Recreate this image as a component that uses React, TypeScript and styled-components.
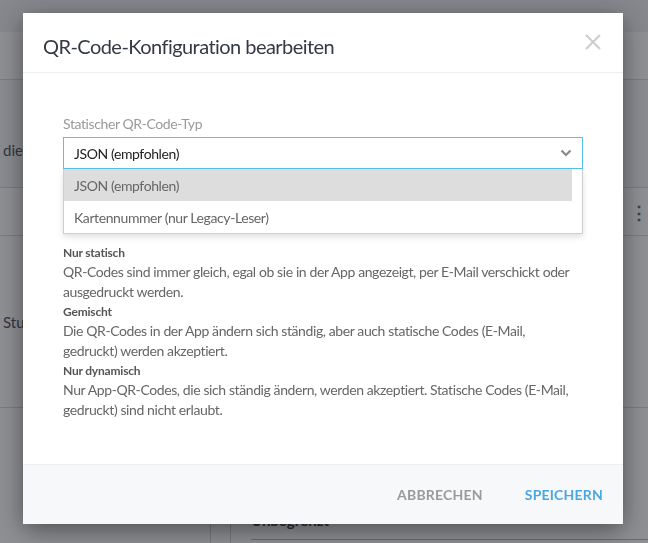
import styled, { createGlobalStyle } from 'styled-components';

// QR code config dialog over a dimmed settings page.

const GlobalStyle = createGlobalStyle`
  html, body {
    margin: 0;
    padding: 0;
    background: #ffffff;
    font-family: Lato, "Liberation Sans", sans-serif;
    color: #555;
  }
  * { box-sizing: border-box; }
`;

const BRAND = '#4aa8e0';
// Lato runs a bit wider than the original face, so tighten it slightly.
const TIGHT = '-0.4px';

/* ---------- page behind the dialog ---------- */

const Page = styled.div`
  width: 648px;
  height: 543px;
  overflow: hidden;
  display: flex;
  flex-direction: column;
  background: #fff;
`;

const TopBar = styled.div`
  height: 32px;
  flex: none;
  background: #eef0f3;
`;

const PageRow = styled.div<{ $height: number; $tint?: boolean; $padTop?: number }>`
  height: ${(p) => p.$height}px;
  flex: none;
  display: flex;
  align-items: center;
  justify-content: space-between;
  padding: ${(p) => p.$padTop ?? 0}px 0 0 3px;
  border-bottom: 1px solid #d8dadd;
  background: ${(p) => (p.$tint ? '#f6f7f9' : '#fff')};
  font-size: 15px;
  color: #555;
`;

const Kebab = styled.span`
  font-size: 18px;
  font-weight: 700;
  color: #666;
  line-height: 1;
`;

const PageBottom = styled.div`
  flex: 1;
  display: grid;
  grid-template-columns: 210px 21px 1fr;
`;

const Gutter = styled.div`
  border-left: 1px solid #d2d4d8;
  border-right: 1px solid #d2d4d8;
`;

const Limits = styled.div`
  display: flex;
  flex-direction: column;
  justify-content: flex-end;
  padding-left: 20px;
`;

const LimitLabel = styled.div`
  font-size: 15px;
  font-weight: 700;
  color: #444;
  padding-bottom: 10px;
  border-bottom: 1px solid #bbb;
  margin-bottom: 3px;
`;

/* ---------- overlay + dialog ---------- */

const Overlay = styled.div`
  position: fixed;
  inset: 0;
  background: rgba(20, 24, 32, 0.48);
  display: flex;
  align-items: flex-start;
  justify-content: flex-start;
  padding: 13px 0 0 23px;
`;

const Dialog = styled.div`
  width: 600px;
  background: #fff;
  box-shadow: 0 6px 24px rgba(0, 0, 0, 0.45);
  display: flex;
  flex-direction: column;
`;

const Header = styled.div`
  height: 60px;
  display: flex;
  align-items: center;
  justify-content: space-between;
  padding: 0 20px;
  border-bottom: 1px solid #eceef0;
`;

const Title = styled.h2`
  margin: 0;
  font-size: 20px;
  font-weight: 400;
  letter-spacing: -0.55px;
  color: #333a44;
  padding-top: 6px;
`;

const CloseButton = styled.button`
  border: none;
  background: none;
  padding: 0;
  width: 20px;
  height: 20px;
  margin-top: -2px;
  display: flex;
  align-items: center;
  justify-content: center;
  cursor: pointer;
`;

const Body = styled.div`
  padding: 41px 40px 43px 40px;
`;

const FieldLabel = styled.div`
  font-size: 14px;
  line-height: 20px;
  letter-spacing: ${TIGHT};
  color: #9a9a9a;
  margin-bottom: 3px;
`;

const SelectWrap = styled.div`
  position: relative;
`;

const SelectBox = styled.div`
  height: 32px;
  border: 1px solid #5bbfeb;
  display: flex;
  align-items: center;
  justify-content: space-between;
  padding: 0 10px;
  font-size: 14px;
  letter-spacing: ${TIGHT};
  color: #222;
`;

const Menu = styled.ul`
  position: absolute;
  left: 0;
  right: 0;
  top: 100%;
  margin: 0;
  padding: 0 10px 0 0;
  list-style: none;
  background: #fff;
  border: 1px solid #cfcfcf;
  border-top: none;
  box-shadow: 0 3px 6px rgba(0, 0, 0, 0.12);
  z-index: 2;
`;

const MenuItem = styled.li<{ $active?: boolean }>`
  height: 32px;
  display: flex;
  align-items: center;
  padding: 0 10px;
  font-size: 14px;
  letter-spacing: ${TIGHT};
  color: #666;
  background: ${(p) => (p.$active ? '#dddddd' : 'transparent')};
`;

const Help = styled.div`
  margin-top: 75px;
  max-width: 514px;
`;

const HelpTitle = styled.div`
  font-size: 12px;
  line-height: 18px;
  font-weight: 700;
  letter-spacing: -0.2px;
  color: #555;
`;

const HelpText = styled.p`
  margin: 0 0 1px 0;
  font-size: 14px;
  line-height: 20px;
  letter-spacing: ${TIGHT};
  color: #666;
`;

const Footer = styled.div`
  height: 60px;
  display: flex;
  align-items: center;
  justify-content: flex-end;
  gap: 42px;
  padding: 0 20px 0 0;
  background: #f7f8fa;
  border-top: 1px solid #eceef0;
`;

const TextButton = styled.button<{ $primary?: boolean }>`
  border: none;
  background: none;
  padding: 0;
  font-family: inherit;
  font-size: 14px;
  font-weight: 700;
  letter-spacing: 0.2px;
  text-transform: uppercase;
  color: ${(p) => (p.$primary ? BRAND : '#9a9a9a')};
  cursor: pointer;
`;

const OPTIONS = ['JSON (empfohlen)', 'Kartennummer (nur Legacy-Leser)'];

const MODES = [
  {
    title: 'Nur statisch',
    text: 'QR-Codes sind immer gleich, egal ob sie in der App angezeigt, per E-Mail verschickt oder ausgedruckt werden.',
  },
  {
    title: 'Gemischt',
    text: 'Die QR-Codes in der App ändern sich ständig, aber auch statische Codes (E-Mail, gedruckt) werden akzeptiert.',
  },
  {
    title: 'Nur dynamisch',
    text: 'Nur App-QR-Codes, die sich ständig ändern, werden akzeptiert. Statische Codes (E-Mail, gedruckt) sind nicht erlaubt.',
  },
];

function CloseIcon() {
  return (
    <svg width="16" height="16" viewBox="0 0 16 16">
      <path d="M1 1 L15 15 M15 1 L1 15" stroke="#cccccc" strokeWidth="2" fill="none" />
    </svg>
  );
}

function Chevron() {
  return (
    <svg width="12" height="8" viewBox="0 0 12 8">
      <path d="M1.5 1.5 L6 6 L10.5 1.5" stroke="#8a8a8a" strokeWidth="2.2" fill="none" />
    </svg>
  );
}

export default function App() {
  const selected = OPTIONS[0];
  return (
    <>
      <GlobalStyle />
      <Page>
        <TopBar />
        <PageRow $height={48} />
        <PageRow $height={108} $tint $padTop={32}>
          <span>die</span>
        </PageRow>
        <PageRow $height={48}>
          <span />
          <Kebab>⋮</Kebab>
        </PageRow>
        <PageRow $height={172}>
          <span>Stud</span>
        </PageRow>
        <PageBottom>
          <div />
          <Gutter />
          <Limits>
            <LimitLabel>Unbegrenzt</LimitLabel>
          </Limits>
        </PageBottom>
      </Page>

      <Overlay>
        <Dialog role="dialog" aria-label="QR-Code-Konfiguration bearbeiten">
          <Header>
            <Title>QR-Code-Konfiguration bearbeiten</Title>
            <CloseButton aria-label="Schließen">
              <CloseIcon />
            </CloseButton>
          </Header>

          <Body>
            <FieldLabel>Statischer QR-Code-Typ</FieldLabel>
            <SelectWrap>
              <SelectBox>
                <span>{selected}</span>
                <Chevron />
              </SelectBox>
              <Menu>
                {OPTIONS.map((o) => (
                  <MenuItem key={o} $active={o === selected}>
                    {o}
                  </MenuItem>
                ))}
              </Menu>
            </SelectWrap>

            <Help>
              {MODES.map((m) => (
                <div key={m.title}>
                  <HelpTitle>{m.title}</HelpTitle>
                  <HelpText>{m.text}</HelpText>
                </div>
              ))}
            </Help>
          </Body>

          <Footer>
            <TextButton>Abbrechen</TextButton>
            <TextButton $primary>Speichern</TextButton>
          </Footer>
        </Dialog>
      </Overlay>
    </>
  );
}
